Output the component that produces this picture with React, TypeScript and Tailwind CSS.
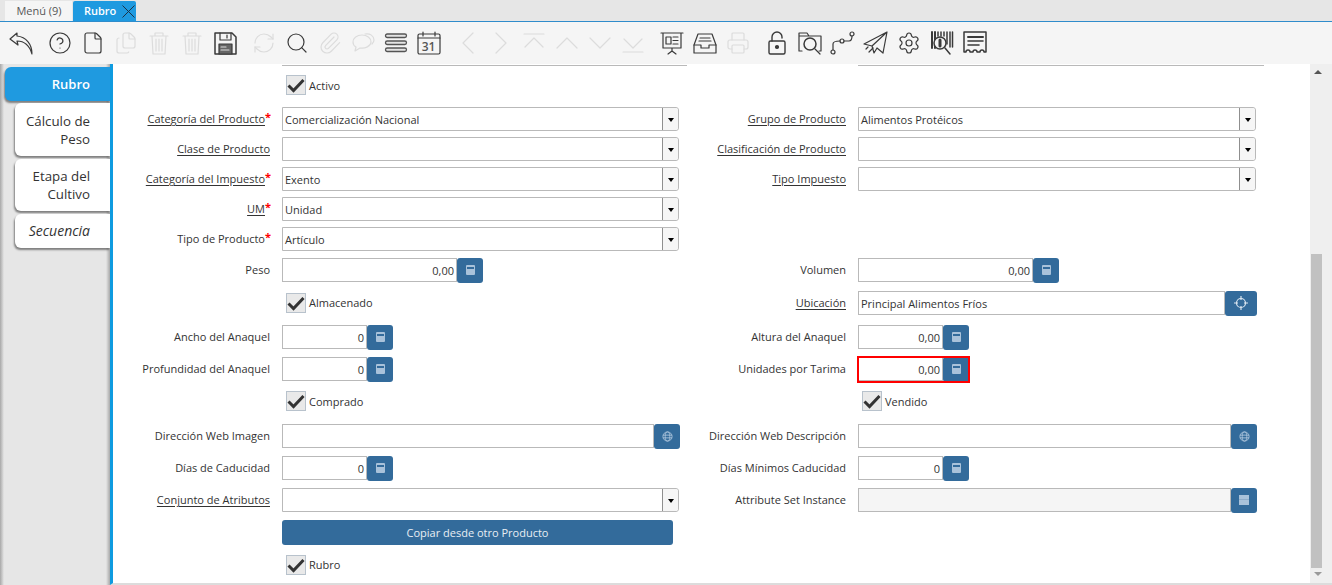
import { CircleHelp, File, Files, Paperclip, Printer, RefreshCw, Search, Settings } from "lucide-react";
import type { ReactNode } from "react";

const font = "font-['Open_Sans',sans-serif]";

const Svg = ({ children, dim }: { children: ReactNode; dim?: boolean }) => (
  <svg width="26" height="26" viewBox="0 0 26 26" fill="none" stroke={dim ? "#dcdcdc" : "#3a3a3a"} strokeWidth="1.2" strokeLinecap="round" strokeLinejoin="round">
    {children}
  </svg>
);

const Undo = () => (
  <Svg><path d="M9 3 2 9l8 6-1-4c6 0 12 3 15 13 0-10-6-17-15-18z" /></Svg>
);
const Trash = () => (
  <Svg dim><path d="M4 6h18M9 6V3h8v3M6 6l1 18h12l1-18M10 9v12M13 9v12M16 9v12" /></Svg>
);
const Floppy = () => (
  <Svg>
    <path d="M3 3h17l4 4v17H3z" strokeWidth="1.5" />
    <path d="M8 3v7h11V3M15 5v3" />
    <rect x="7" y="14" width="13" height="10" fill="#666" stroke="#3a3a3a" />
    <path d="M9 17h5M9 20h8" stroke="#ddd" />
  </Svg>
);
const Chat = () => (
  <Svg dim>
    <path d="M12 5c-5 0-9 3-9 7 0 2 1 4 3 5l-1 4 5-3c5 1 11-2 11-6 0-4-4-7-9-7z" />
    <path d="M15 4c5-1 9 2 9 6 0 2-1 3-2 4" />
  </Svg>
);
const Lines = () => (
  <svg width="26" height="26" viewBox="0 0 26 26" fill="#e4e4e4" stroke="#555" strokeWidth="1.3">
    <rect x="2.500" y="4" width="21" height="3.500" rx="1.750" />
    <rect x="2.500" y="11" width="21" height="3.500" rx="1.750" />
    <rect x="2.500" y="18" width="21" height="3.500" rx="1.750" />
  </svg>
);
const Calendar = () => (
  <div className="relative h-[26px] w-[26px]">
    <Svg>
      <rect x="2" y="4" width="22" height="20" rx="1.500" />
      <path d="M2 8h22M7 2v4M19 2v4" />
    </Svg>
    <span className={`absolute left-0 top-[10px] w-full text-center text-[12px] leading-[14px] font-semibold text-[#555] ${font}`}>31</span>
  </div>
);
const Chevron = ({ d }: { d: string }) => (
  <Svg dim><path d={d} /></Svg>
);
const Present = () => (
  <Svg>
    <path d="M2 3h22M4 3v15h18V3M13 18v3M9 24l4-3 4 3" />
    <rect x="7" y="7" width="5" height="7" />
    <path d="M14 7h5M14 10.500h5M14 14h5" />
  </Svg>
);
const Tray = () => (
  <Svg>
    <path d="M6 4h14l4 11v8H2v-8z" />
    <path d="M2 15h7v3h8v-3h7M8 8h10M7 11h12" />
  </Svg>
);
const Lock = () => (
  <Svg>
    <rect x="5" y="11" width="16" height="13" rx="1.500" strokeWidth="1.400" />
    <path d="M8 11V7a5 5 0 0 1 10 0v1" strokeWidth="1.400" />
    <circle cx="13" cy="17" r="1.500" fill="#3a3a3a" />
  </Svg>
);
const FolderSearch = () => (
  <Svg>
    <path d="M5 21H2V3h8l2 3h12v15h-2M2 6h10" />
    <circle cx="13" cy="14" r="6" strokeWidth="1.500" />
    <path d="m18 19 5 5" />
  </Svg>
);
const RouteNodes = () => (
  <Svg>
    <circle cx="3" cy="22" r="2" />
    <circle cx="12" cy="11" r="2" />
    <circle cx="22" cy="4" r="2" />
    <path d="M3 20v-6c0-2 2-3 7-3M14 11h5c2 0 3-1 3-5" />
  </Svg>
);
const Plane = () => (
  <Svg>
    <path d="M24 2 1 14l8 2zM24 2 9 16l2 7 3-5 6 5z" />
    <path d="M6 22l4-4M3 19l2-2" />
  </Svg>
);
const Barcode = () => (
  <Svg>
    <path d="M3 2v16M6 2v16" strokeWidth="2" />
    <path d="M9 2v4M12 2v4M15 2v4M18 2v12M21 2v15M23.500 2v15" strokeWidth="1.500" />
    <circle cx="11" cy="13" r="6" fill="#f5f5f5" strokeWidth="1.500" />
    <path d="M11 10v6" strokeWidth="3" />
    <path d="m16 18 5 6" strokeWidth="1.500" />
  </Svg>
);
const Receipt = () => (
  <Svg>
    <path d="M2 2h22v20h-2a2 2 0 0 0-4 0h-3a2 2 0 0 0-4 0H8a2 2 0 0 0-4 0H2z" strokeWidth="1.500" />
    <path d="M6 7h15" strokeWidth="2" />
    <path d="M6 11h15M6 15h11" strokeWidth="1.600" />
  </Svg>
);

const lucide = { strokeWidth: 1.2, size: 24 };
const dim = "#dcdcdc";
const dark = "#3a3a3a";

const toolbar: ReactNode[][] = [
  [<Undo />],
  [
    <CircleHelp {...lucide} color={dark} />,
    <File {...lucide} color={dark} />,
    <Files {...lucide} color={dim} />,
    <Trash />,
    <Trash />,
    <Floppy />,
  ],
  [
    <RefreshCw {...lucide} color={dim} />,
    <Search {...lucide} color={dark} />,
    <Paperclip {...lucide} color={dim} />,
    <Chat />,
    <Lines />,
    <Calendar />,
  ],
  [
    <Chevron d="M18 3 8 13l10 10" />,
    <Chevron d="m8 3 10 10L8 23" />,
    <Chevron d="M3 4h20M4 17 13 8l9 9" />,
    <Chevron d="m3 18 10-10 10 10" />,
    <Chevron d="m3 8 10 10L23 8" />,
    <Chevron d="M3 22h20M4 9l9 9 9-9" />,
  ],
  [<Present />, <Tray />, <Printer {...lucide} color={dim} />],
  [
    <Lock />,
    <FolderSearch />,
    <RouteNodes />,
    <Plane />,
    <Settings {...lucide} color={dark} />,
    <Barcode />,
    <Receipt />,
  ],
];

const Calc = () => (
  <svg width="9" height="10" viewBox="0 0 9 10" fill="#a9c2da">
    <path d="M1 0h7a1 1 0 0 1 1 1v8a1 1 0 0 1-1 1H1a1 1 0 0 1-1-1V1a1 1 0 0 1 1-1zm0 2v2h7V2z" fillRule="evenodd" />
  </svg>
);
const Globe = () => (
  <svg width="11" height="11" viewBox="0 0 12 12" fill="none" stroke="#a9c2da" strokeWidth="1">
    <circle cx="6" cy="6" r="5" />
    <ellipse cx="6" cy="6" rx="2.500" ry="5" />
    <path d="M1 4.500h10M1 7.500h10" />
  </svg>
);
const Target = () => (
  <svg width="14" height="14" viewBox="0 0 14 14" fill="none" stroke="#dbe6f0" strokeWidth="1.200">
    <circle cx="7" cy="7" r="4.500" />
    <path d="M7 0v4M7 10v4M0 7h4M10 7h4" />
  </svg>
);
const Grid = () => (
  <svg width="10" height="10" viewBox="0 0 10 10">
    <rect width="10" height="10" fill="#a9c2da" />
    <path d="M0 4.500h10" stroke="#8fadc9" strokeWidth="1" />
  </svg>
);

const Label = ({ text, link, required }: { text?: string; link?: boolean; required?: boolean }) => (
  <div className="flex justify-end pr-[12px] text-[11px] leading-[16px] text-[#333]">
    {text && <span className={link ? "underline underline-offset-2" : ""}>{text}</span>}
    {required && <span className="-mt-[2px] w-[5px] font-bold text-[#f00]">*</span>}
  </div>
);

const Select = ({ value, wide }: { value?: string; wide?: boolean }) => (
  <div className={`flex h-[24px] rounded-r-[3px] border border-[#b9b9b9] bg-white ${wide ? "w-[398px]" : "w-[397px]"}`}>
    <div className="flex-1 pl-[2px] text-[11px] leading-[23px] text-[#333]">{value}</div>
    <div className="flex w-[16px] items-center justify-center rounded-r-[3px] border-l border-[#8f8f8f] bg-[#f6f6f6]">
      <div className="mt-[1px] h-0 w-0 border-x-[3px] border-t-[4px] border-x-transparent border-t-black" />
    </div>
  </div>
);

const IconBtn = ({ children, wide }: { children: ReactNode; wide?: boolean }) => (
  <div className={`flex h-[25px] shrink-0 items-center justify-center rounded-[3px] bg-[#336b9b] ${wide ? "w-[32px]" : "w-[26px]"}`}>{children}</div>
);

const Num = ({ value, short, red }: { value: string; short?: boolean; red?: boolean }) => (
  <div className={`flex items-center ${short ? "w-[111px]" : "w-[201px]"} ${red ? "outline-2 -outline-offset-1 outline-[#f00]" : ""}`}>
    <div className="h-[24px] flex-1 border border-[#b9b9b9] bg-white pr-[2px] text-right text-[11px] leading-[24px] text-[#333]">{value}</div>
    <IconBtn><Calc /></IconBtn>
  </div>
);

const Text = ({ value, wide, width, disabled, icon }: { value?: string; wide?: boolean; width: string; disabled?: boolean; icon: ReactNode }) => (
  <div className={`flex items-center ${width}`}>
    <div className={`h-[24px] flex-1 border border-[#b9b9b9] pl-[2px] text-[11px] leading-[23px] text-[#333] ${disabled ? "bg-[#f5f5f5]" : "bg-white"}`}>{value}</div>
    <IconBtn wide={wide}>{icon}</IconBtn>
  </div>
);

const Check = ({ label, low }: { label: string; low?: boolean }) => (
  <div className="flex items-center pl-[4px]">
    <div className="flex h-[20px] w-[20px] items-center justify-center border border-[#b8c2cc] bg-[#e9e9e9]">
      <svg width="18" height="15" viewBox="0 0 18 15" fill="none" stroke="#333" strokeWidth="3">
        <path d="m1.500 7.500 5 5L16.500 2" />
      </svg>
    </div>
    <span className={`pl-[3px] text-[11px] leading-[16px] text-[#333] ${low ? "pt-[2px]" : ""}`}>{label}</span>
  </div>
);

const Row = ({ h, left, right, lLabel, rLabel }: { h: string; left?: ReactNode; right?: ReactNode; lLabel?: ReactNode; rLabel?: ReactNode }) => (
  <div className={`grid grid-cols-[169px_397px_179px_1fr] items-center ${h}`}>
    {lLabel ?? <div />}
    <div>{left}</div>
    {rLabel ?? <div />}
    <div>{right}</div>
  </div>
);

const SideTab = ({ children, active, italic, h }: { children: ReactNode; active?: boolean; italic?: boolean; h: string }) => (
  <div
    className={`flex flex-col justify-center rounded-l-[6px] pr-[20px] text-right leading-[18px] shadow-[-1px_2px_2px_rgba(0,0,0,0.45)] ${h} ${
      active ? "ml-[5px] w-[105px] bg-[#1f9ae0] text-[13px] font-semibold text-white" : "ml-[15px] w-[95px] bg-white text-[#333]"
    } ${italic ? "text-[14px] italic" : active ? "" : "text-[13.3px]"}`}
  >
    {children}
  </div>
);

export default function App() {
  return (
    <div className={`flex h-[585px] w-[1332px] flex-col overflow-hidden bg-white ${font}`}>
      <div className="flex h-[22px] shrink-0 items-end border-b border-[#2f8ccb] bg-[#e6e6e6] pl-[5px]">
        <div className="flex h-[20px] w-[67px] items-center justify-center bg-[#f5f5f5] pl-[1px] pt-[1px] text-[11px] text-[#555]">Menú (9)</div>
        <div className="ml-[1px] flex h-[20px] w-[63px] items-center rounded-t-[2px] bg-[#1f9ae0] pl-[11px] pt-[1px] text-[11px] font-semibold text-white">
          Rubro
          <svg className="ml-[6px]" width="13" height="13" viewBox="0 0 13 13" stroke="#1c3346" strokeWidth="1">
            <path d="m0.500 0.500 12 12M12.500 0.500l-12 12" />
          </svg>
        </div>
      </div>

      <div className="flex h-[42px] shrink-0 items-center gap-[6px] bg-[#f5f5f5] pl-[4px]">
        {toolbar.map((group, i) => (
          <div key={i} className="flex">
            {group.map((icon, j) => (
              <div key={j} className="flex h-[33px] w-[33px] items-center justify-center">{icon}</div>
            ))}
          </div>
        ))}
      </div>

      <div className="flex min-h-0 flex-1">
        <div className="flex w-[110px] shrink-0 flex-col gap-[2px] bg-[linear-gradient(90deg,#a8a8a8_0px,#e6e6e6_4px,#e6e6e6_106px,#a8a8a8_110px)] pt-[3px]">
          <SideTab active h="h-[34px]">Rubro</SideTab>
          <SideTab h="h-[53px]">Cálculo de<br />Peso</SideTab>
          <SideTab h="h-[52px] mt-[1px]">Etapa del<br />Cultivo</SideTab>
          <SideTab italic h="h-[34px] mt-[1px]">Secuencia</SideTab>
        </div>

        <div className="flex min-w-0 flex-1 flex-col border-b-2 border-[#dcdcdc] border-l-[3px] border-l-[#0f9be0] bg-white pb-[1px]">
          <div className="grid h-[2px] grid-cols-[169px_405px_171px_406px]">
            <div />
            <div className="border-b border-[#b9b9b9]" />
            <div />
            <div className="border-b border-[#b9b9b9]" />
          </div>
          <Row h="h-[38px]" left={<Check low label="Activo" />} />
          <Row h="h-[30px]" lLabel={<Label text="Categoría del Producto" link required />} left={<Select value="Comercialización Nacional" />} rLabel={<Label text="Grupo de Producto" link />} right={<Select wide value="Alimentos Protéicos" />} />
          <Row h="h-[30px]" lLabel={<Label text="Clase de Producto" link />} left={<Select />} rLabel={<Label text="Clasificación de Producto" link />} right={<Select wide />} />
          <Row h="h-[30px]" lLabel={<Label text="Categoría del Impuesto" link required />} left={<Select value="Exento" />} rLabel={<Label text="Tipo Impuesto" link />} right={<Select wide />} />
          <Row h="h-[30px]" lLabel={<Label text="UM" link required />} left={<Select value="Unidad" />} />
          <Row h="h-[30px]" lLabel={<Label text="Tipo de Producto" required />} left={<Select value="Artículo" />} />
          <Row h="h-[32px]" lLabel={<Label text="Peso" />} left={<Num value="0,00" />} rLabel={<Label text="Volumen" />} right={<Num value="0,00" />} />
          <Row h="h-[34px]" left={<Check label="Almacenado" />} rLabel={<Label text="Ubicación" link />} right={<Text width="w-[399px]" wide value="Principal Alimentos Fríos" icon={<Target />} />} />
          <Row h="h-[34px]" lLabel={<Label text="Ancho del Anaquel" />} left={<Num short value="0" />} rLabel={<Label text="Altura del Anaquel" />} right={<Num short value="0,00" />} />
          <Row h="h-[30px]" lLabel={<Label text="Profundidad del Anaquel" />} left={<Num short value="0" />} rLabel={<Label text="Unidades por Tarima" />} right={<Num short red value="0,00" />} />
          <Row h="h-[34px]" left={<Check low label="Comprado" />} right={<Check low label="Vendido" />} />
          <Row h="h-[36px]" lLabel={<Label text="Dirección Web Imagen" />} left={<Text width="w-[398px]" icon={<Globe />} />} rLabel={<Label text="Dirección Web Descripción" />} right={<Text width="w-[399px]" icon={<Globe />} />} />
          <Row h="h-[28px]" lLabel={<Label text="Días de Caducidad" />} left={<Num short value="0" />} rLabel={<Label text="Días Mínimos Caducidad" />} right={<Num short value="0" />} />
          <Row h="h-[36px]" lLabel={<Label text="Conjunto de Atributos" link />} left={<Select />} rLabel={<Label text="Attribute Set Instance" />} right={<Text width="w-[399px]" disabled icon={<Grid />} />} />
          <Row h="h-[30px]" left={<div className="-mt-[1px] flex h-[25px] w-[391px] items-center justify-center rounded-[3px] bg-[#336b9b] pt-[1px] text-[11px] text-[#e8eef4]">Copiar desde otro Producto</div>} />
          <Row h="h-[34px]" left={<Check label="Rubro" />} />
        </div>

        <div className="relative flex w-[22px] shrink-0 flex-col items-start border-b-2 border-[#dcdcdc] bg-[#efefef] pl-[1px]">
          <div className="ml-[3px] mt-[6px] h-0 w-0 border-x-[4px] border-b-[4px] border-x-transparent border-b-[#555]" />
          <div className="mt-[180px] h-[314px] w-[11px] bg-[#c1c1c1]" />
          <div className="ml-[3px] mt-[4px] h-0 w-0 border-x-[4px] border-t-[4px] border-x-transparent border-t-[#999]" />
        </div>
      </div>
    </div>
  );
}
